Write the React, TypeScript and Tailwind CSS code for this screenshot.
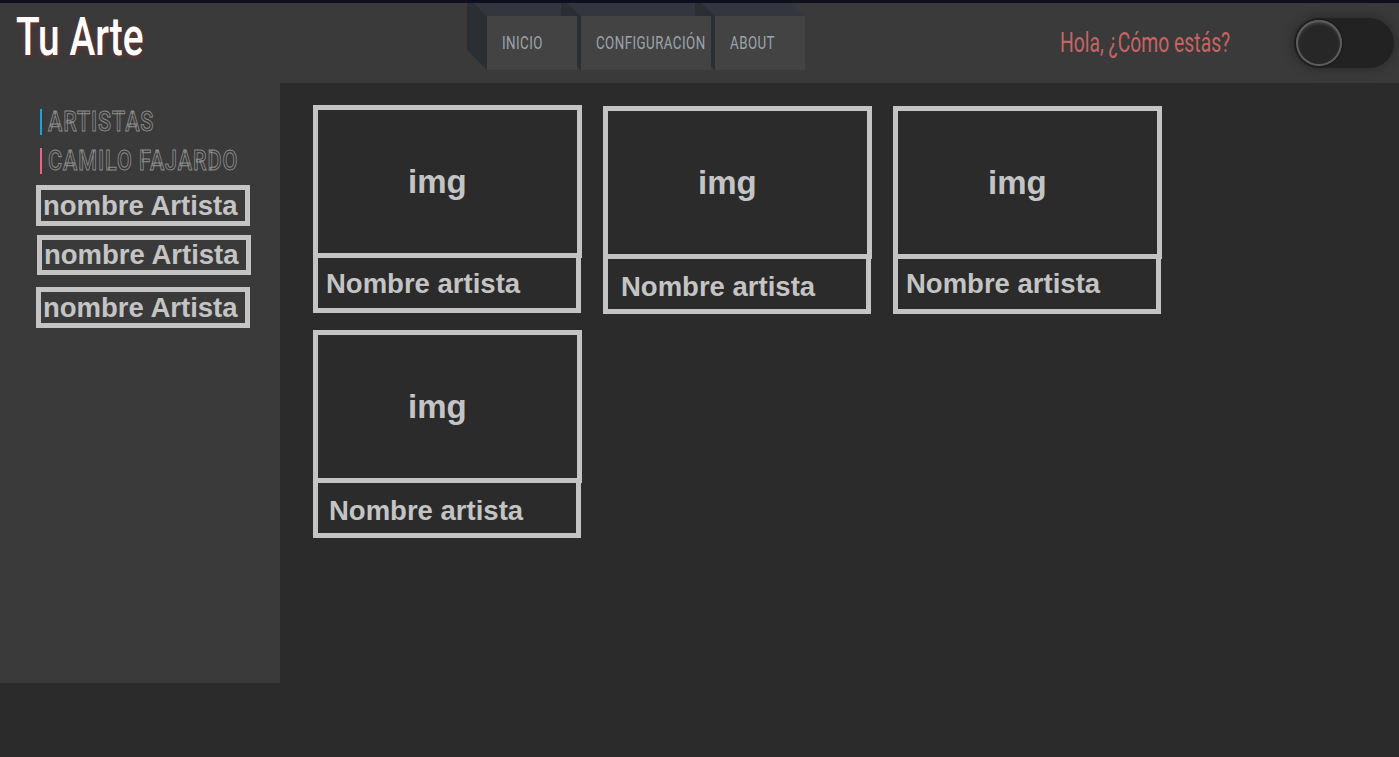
const narrow = "font-['Roboto','Open_Sans',sans-serif] inline-block origin-left whitespace-nowrap";

const navItems = [
  { label: "INICIO", w: "w-[90px]" },
  { label: "CONFIGURACIÓN", w: "w-[130px]" },
  { label: "ABOUT", w: "w-[90px]" },
];

const cards = [
  { pl: "pl-[8px]", pt: "pt-[10px]", top: "" },
  { pl: "pl-[13px]", pt: "pt-[12px]", top: "mt-px" },
  { pl: "pl-[8px]", pt: "pt-[9px]", top: "mt-px" },
  { pl: "pl-[11px]", pt: "pt-[12px]", top: "" },
];

function NavButton({ label, w }: { label: string; w: string }) {
  return (
    <div className={`relative h-[54px] ${w} bg-[#434343] flex items-center pl-[15px]`}>
      {/* extruded faces, drawn behind every button */}
      <div className="absolute -left-5 -top-5 right-0 bottom-0 -z-10 bg-[#2b2e32] [clip-path:polygon(0_0,20px_20px,20px_100%,0_calc(100%_-_20px))]" />
      <div className="absolute -left-5 -top-5 right-0 bottom-0 -z-10 bg-[#33363e] [clip-path:polygon(0_0,calc(100%_-_20px)_0,100%_20px,20px_20px)]" />
      <span className={`${narrow} scale-x-[0.74] text-[18px] leading-[20px] text-[#9ba3ad] tracking-[0.6px]`}>{label}</span>
    </div>
  );
}

function ArtistCard({ pl, pt, top }: { pl: string; pt: string; top: string }) {
  return (
    <div className={`w-[269px] ${top} font-['Liberation_Sans',Arial,sans-serif] font-bold text-[#c4c4c4]`}>
      <div className="h-[153px] border-[5px] border-[#c4c4c4] flex items-center pl-[90px]">
        <span className="text-[33px]">img</span>
      </div>
      <div className={`h-[55px] w-[268px] border-[5px] border-t-0 border-[#c4c4c4] ${pl} ${pt}`}>
        <span className="text-[27.5px] leading-[31px] block whitespace-nowrap">Nombre artista</span>
      </div>
    </div>
  );
}

export default function App() {
  return (
    <div className="min-h-screen bg-[#2b2b2b]">
      {/* Top bar */}
      <header className="h-[83px] border-t-[3px] border-[#0e0e1e] bg-[#3a3a3a] flex items-center relative overflow-hidden">
        <div className="w-[487px] self-start pl-4 pt-[4px]">
          <h1
            className={`${narrow} scale-x-[0.72] font-medium text-[54px] leading-[60px] text-white [text-shadow:0_2px_6px_rgba(170,40,40,0.45)]`}
          >
            Tu Arte
          </h1>
        </div>
        <nav className="flex gap-1 isolate">
          {navItems.map((n) => (
            <NavButton key={n.label} label={n.label} w={n.w} />
          ))}
        </nav>
        <div className="ml-auto flex items-center">
          <div className="w-[234px]">
            <span className={`${narrow} scale-x-[0.69] text-[28px] text-[#c76462]`}>Hola, ¿Cómo estás?</span>
          </div>
          <div className="mr-[5px] w-[100px] h-[50px] rounded-full bg-[#222222] p-[2px] flex items-center shadow-[0_0_12px_rgba(0,0,0,0.35)]">
            <div className="w-[46px] h-[46px] rounded-full bg-[#272727] shadow-[inset_0_0_0_2px_#5c5c5c,inset_0_2px_4px_rgba(255,255,255,0.25),0_0_3px_rgba(0,0,0,0.6)]" />
          </div>
        </div>
      </header>

      <div className="flex">
        {/* Sidebar */}
        <aside className="w-[280px] h-[600px] bg-[#3a3a3a] pt-[26px] pl-9">
          <div className="pl-1">
            <div className="border-l-2 border-[#1aa3dc] pl-[6px] h-[26px] flex items-center">
              <span className={`${narrow} scale-x-[0.77] font-medium text-[28px] leading-none text-transparent [-webkit-text-stroke:1px_#8d8d8d] tracking-[1.2px]`}>
                ARTISTAS
              </span>
            </div>
            <div className="mt-[13px] border-l-2 border-[#e8648a] pl-[6px] h-[26px] flex items-center">
              <span className={`${narrow} scale-x-[0.77] font-medium text-[28px] leading-none text-transparent [-webkit-text-stroke:1px_#8d8d8d] tracking-[1.2px]`}>
                CAMILO FAJARDO
              </span>
            </div>
          </div>
          <div className="mt-[11px] font-['Liberation_Sans',Arial,sans-serif] font-bold text-[27.5px] leading-[31px] text-[#c4c4c4] whitespace-nowrap">
            <div className="w-[214px] h-[41px] border-[5px] border-[#c4c4c4] pl-[2px]">nombre Artista</div>
            <div className="ml-px mt-[9px] w-[214px] h-[40px] border-[5px] border-[#c4c4c4] pl-[2px] leading-[30px]">nombre Artista</div>
            <div className="mt-[12px] w-[214px] h-[41px] border-[5px] border-[#c4c4c4] pl-[2px]">nombre Artista</div>
          </div>
        </aside>

        {/* Cards */}
        <main className="flex-1 pl-[33px] pt-[22px]">
          <div className="grid grid-cols-[repeat(3,269px)] gap-x-[21px] gap-y-[16px] items-start">
            {cards.map((c, i) => (
              <ArtistCard key={i} pl={c.pl} pt={c.pt} top={c.top} />
            ))}
          </div>
        </main>
      </div>
    </div>
  );
}
